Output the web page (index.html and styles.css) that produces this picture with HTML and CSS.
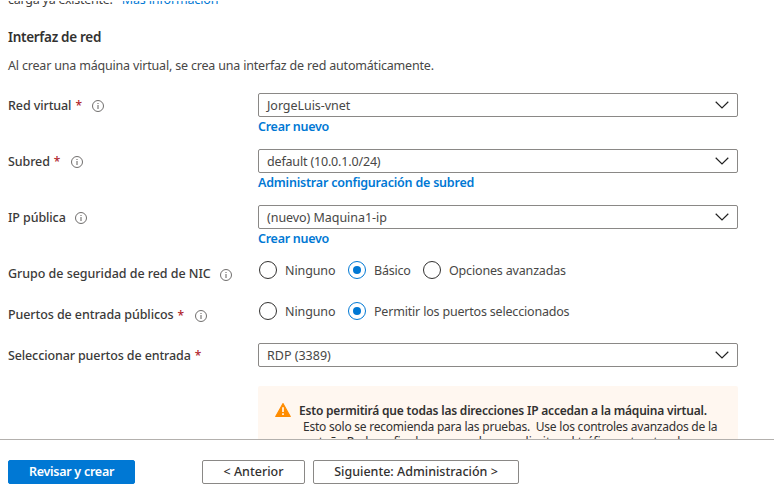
FILE: index.html
```html
<!DOCTYPE html>
<html lang="es">
<head>
<meta charset="utf-8">
<title>Crear una máquina virtual</title>
<link rel="stylesheet" href="styles.css">
</head>
<body>
<svg class="defs" aria-hidden="true">
  <symbol id="info" viewBox="0 0 12 12"><circle cx="6" cy="6" r="5.5" fill="none" stroke="#605e5c" stroke-width=".9"/><path d="M6 5v4M6 3v1" stroke="#605e5c"/></symbol>
  <symbol id="chevron" viewBox="0 0 14 8"><path d="M.7.8 7 7 13.300.8" fill="none" stroke="#222" stroke-width="1.2"/></symbol>
</svg>
<main class="content">
  <p class="intro"><span class="t-intro">carga ya existente.</span><a class="t-more">Más información</a></p>
  <h2><span class="t-head">Interfaz de red</span></h2>
  <p class="desc"><span class="t-desc">Al crear una máquina virtual, se crea una interfaz de red automáticamente.</span></p>

  <div class="row">
    <div class="label"><span class="t-red">Red virtual</span><b>*</b><svg><use href="#info"/></svg></div>
    <div class="field"><div class="select"><span class="t-vnet">JorgeLuis-vnet</span><svg><use href="#chevron"/></svg></div><a><span class="t-new">Crear nuevo</span></a></div>
  </div>
  <div class="row">
    <div class="label"><span class="t-sub">Subred</span><b>*</b><svg><use href="#info"/></svg></div>
    <div class="field"><div class="select"><span class="t-default">default (10.0.1.0/24)</span><svg><use href="#chevron"/></svg></div><a><span class="t-admin">Administrar configuración de subred</span></a></div>
  </div>
  <div class="row">
    <div class="label"><span class="t-ip">IP pública</span><svg class="near"><use href="#info"/></svg></div>
    <div class="field"><div class="select"><span class="t-maq">(nuevo) Maquina1-ip</span><svg><use href="#chevron"/></svg></div><a><span class="t-new">Crear nuevo</span></a></div>
  </div>
  <div class="row choice">
    <div class="label low"><span class="t-nic">Grupo de seguridad de red de NIC</span><svg class="near"><use href="#info"/></svg></div>
    <div class="radios">
      <div class="radio first"><i></i><span class="t-none">Ninguno</span></div>
      <div class="radio second"><i class="on"></i><span class="t-basic">Básico</span></div>
      <div class="radio"><i></i><span class="t-adv">Opciones avanzadas</span></div>
    </div>
  </div>
  <div class="row choice">
    <div class="label low"><span class="t-ports">Puertos de entrada públicos</span><b>*</b><svg><use href="#info"/></svg></div>
    <div class="radios">
      <div class="radio first"><i></i><span class="t-none">Ninguno</span></div>
      <div class="radio"><i class="on"></i><span class="t-allow">Permitir los puertos seleccionados</span></div>
    </div>
  </div>
  <div class="row last">
    <div class="label"><span class="t-select">Seleccionar puertos de entrada</span><b>*</b></div>
    <div class="field"><div class="select"><span class="t-rdp">RDP (3389)</span><svg><use href="#chevron"/></svg></div></div>
  </div>
  <div class="warning">
    <svg viewBox="0 0 16 14"><path d="M8 .6 15.300 13.400H.7Z" fill="#ff8c00" stroke="#ff8c00" stroke-width="1.100" stroke-linejoin="round"/><path d="M8 4.300v4.700M8 10.300v1.700" stroke="#fff" stroke-width="1.600"/></svg>
    <div class="message">
      <strong><span class="t-w1">Esto permitirá que todas las direcciones IP accedan a la máquina virtual.</span></strong>
      <p class="indent"><span class="t-w2">Esto solo se recomienda para las pruebas.&nbsp; Use los controles avanzados de la</span></p>
      <p><span class="t-w3">pestaña Redes a fin de crear reglas para limitar el tráfico entrante a las</span></p>
    </div>
  </div>
</main>
<footer>
  <button class="primary"><span class="t-b1">Revisar y crear</span></button>
  <button class="prev"><span class="t-b2">&lt; Anterior</span></button>
  <button class="next"><span class="t-b3">Siguiente: Administración &gt;</span></button>
</footer>
</body>
</html>
```
FILE: styles.css
```css
* { box-sizing: border-box; }
body { margin: 0; width: 774px; height: 497px; overflow: hidden; display: flex; flex-direction: column; background: #fff; color: #323130; font: 12.5px/18px "Noto Sans", sans-serif; }
.defs { position: absolute; width: 0; height: 0; }
p, h2 { margin: 0; white-space: nowrap; }
a { color: #0078d4; }
.content { height: 438px; margin-top: 1px; flex: none; overflow: hidden; padding: 0 36px 0 8px; }
.intro { height: 18px; margin-top: -10px; display: flex; gap: 9px; color: #3f3e3d; }
h2 { font-size: 13.5px; font-weight: 600; margin-top: 19px; height: 18px; }
.desc { margin-top: 11px; height: 18px; color: #484746; }
.row { display: flex; height: 56px; }
.desc + .row { margin-top: 18px; }
.label { width: 250px; height: 24px; display: flex; align-items: center; white-space: nowrap; font-weight: 500; color: #3b3a39; }
.label span, .select span, .radio span { padding-top: 2px; }
.label.low span { padding-top: 0; }
.label b { color: #b0232b; margin-left: 4px; width: 6px; font-size: 12px; font-weight: 500; padding-top: 1px; }
.label svg { width: 12px; height: 12px; margin: 1px 0 0 11px; }
.label svg.near { margin-left: 9px; }
.field { width: 480px; }
.select { height: 24px; border: 1px solid #8a8886; border-radius: 2px; display: flex; align-items: center; justify-content: space-between; padding: 0 8px; color: #484746; }
.select svg { width: 14px; height: 8px; }
.field a { display: block; font-weight: 600; height: 18px; padding-top: 1px; }
.choice { height: 41px; }
.low { margin-top: 1px; }
.radios { display: flex; height: 18px; color: #484746; }
.radio { display: flex; align-items: center; white-space: nowrap; gap: 8px; }
.first { width: 89px; }
.second { width: 75px; }
.radio i { width: 18px; height: 18px; margin-left: 1px; border: 1px solid #323130; border-radius: 50%; display: grid; place-items: center; flex: none; }
.radio .on { border-color: #0078d4; }
.on::after { content: ""; width: 8px; height: 8px; border-radius: 50%; background: #0078d4; }
.last { height: 43px; }
.warning { margin-left: 250px; width: 480px; height: 80px; background: #fff7f0; border-radius: 2px; display: flex; padding: 17px 16px 0 17px; }
.warning svg { width: 16px; height: 14px; flex: none; }
.message { margin-left: 8px; font-size: 12px; line-height: 15.6px; white-space: nowrap; }
.message strong { display: block; font-weight: 600; }
.indent { padding-left: 4px; }
footer { border-top: 1px solid #b3b0ad; height: 58px; padding: 20px 8px 0; display: flex; background: #fff; }
button { height: 24px; border: 1px solid #8a8886; border-radius: 2px; background: #fff; color: #323130; font: 500 12.5px/20px "Noto Sans", sans-serif; padding: 0; white-space: nowrap; }
.primary { width: 127px; background: #0078d4; border-color: #0078d4; color: #fff; font-weight: 600; }
.prev { width: 103px; margin-left: 67px; }
.next { width: 206px; margin-left: 8px; }

/* Tracking per text */
.t-intro { letter-spacing: -.25px; }
.t-more { letter-spacing: -.15px; }
.t-head { letter-spacing: -.3px; }
.t-desc { letter-spacing: -.185px; }
.t-red, .t-sub, .t-ip { letter-spacing: -.1px; }
.t-vnet, .t-maq { letter-spacing: -.05px; }
.t-new { letter-spacing: -.27px; }
.t-default { letter-spacing: -.17px; }
.t-admin { letter-spacing: -.21px; }
.t-none { letter-spacing: -.1px; }
.t-basic { letter-spacing: -.2px; }
.t-adv { letter-spacing: -.17px; }
.t-allow { letter-spacing: -.19px; }
.t-nic { letter-spacing: -.04px; }
.t-ports { letter-spacing: -.09px; }
.t-select { letter-spacing: -.12px; }
.t-w1 { letter-spacing: -.2px; }
.t-w2 { letter-spacing: -.23px; }
.t-w3 { letter-spacing: -.05px; }
.t-b1 { letter-spacing: -.27px; }
```
